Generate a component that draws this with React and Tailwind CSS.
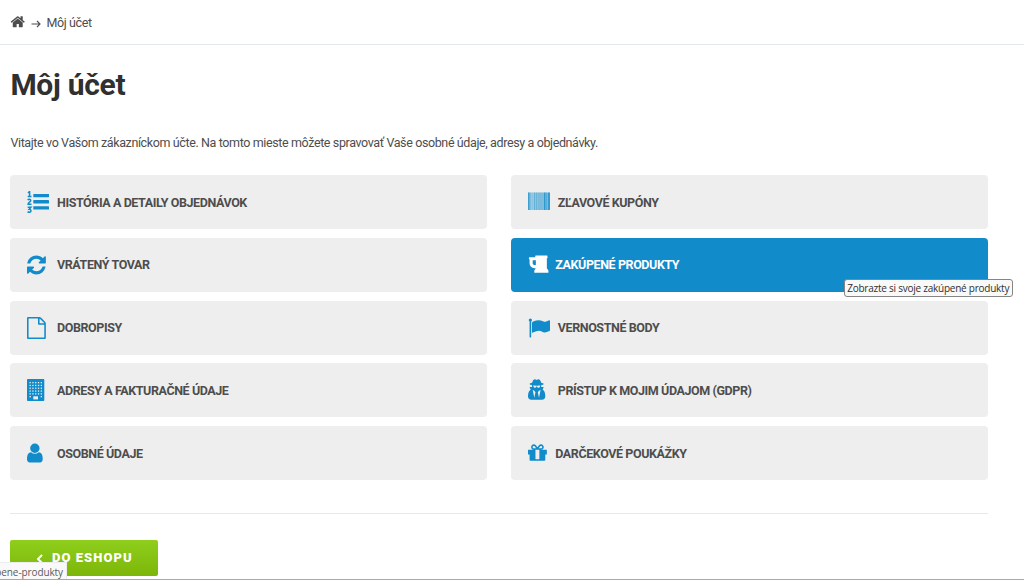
import React from "react";

const PATHS = {
  home: "M1472 992v480q0 26-19 45t-45 19h-384v-384h-256v384h-384q-26 0-45-19t-19-45v-480q0-1 .5-3t.5-3l575-474 575 474q1 2 1 6zm223-69l-62 74q-8 9-21 11h-3q-13 0-21-7l-692-577-692 577q-12 8-24 7-13-2-21-11l-62-74q-8-10-7-23.5t11-21.5l719-599q32-26 76-26t76 26l244 204v-195q0-14 9-23t23-9h192q14 0 23 9t9 23v408l219 182q10 8 11 21.5t-7 23.5z",
  refresh: "M1639 1056q0 5-1 7-64 268-268 434.5t-478 166.5q-146 0-282.5-55t-243.5-157l-129 129q-19 19-45 19t-45-19-19-45v-448q0-26 19-45t45-19h448q26 0 45 19t19 45-19 45l-137 137q71 66 161 102t187 36q134 0 250-65t186-179q11-17 53-117 8-23 30-23h192q13 0 22.5 9.5t9.5 22.5zm25-800v448q0 26-19 45t-45 19h-448q-26 0-45-19t-19-45 19-45l138-138q-148-137-349-137-134 0-250 65t-186 179q-11 17-53 117-8 23-30 23h-199q-13 0-22.5-9.5t-9.5-22.5v-7q65-268 270-434.5t480-166.5q146 0 284 55.5t245 156.5l130-129q19-19 45-19t45 19 19 45z",
  file: "M1596 380q28 28 48 76t20 88v1152q0 40-28 68t-68 28h-1344q-40 0-68-28t-28-68v-1600q0-40 28-68t68-28h896q40 0 88 20t76 48zm-444-244v376h376q-10-29-22-41l-313-313q-12-12-41-22zm384 1528v-1024h-416q-40 0-68-28t-28-68v-416h-768v1536h1280z",
  user: "M1536 1399q0 109-62.5 187t-150.5 78h-854q-88 0-150.5-78t-62.5-187q0-85 8.5-160.5t31.5-152 58.5-131 94-89 134.5-34.5q131 128 313 128t313-128q76 0 134.5 34.5t94 89 58.5 131 31.5 152 8.5 160.5zm-256-887q0 159-112.5 271.5t-271.5 112.5-271.5-112.5-112.5-271.5 112.5-271.5 271.5-112.5 271.5 112.5 112.5 271.5z",
  beer: "M640 896v-384h-256v256q0 53 37.5 90.5t90.5 37.5h128zm1024 448v192h-1152v-192l128-192h-128q-159 0-271.5-112.5t-112.5-271.5v-320l-64-64 32-128h480l32-128h960l32 192-64 32v800z",
  flag: "M320 256q0 72-64 110v1266q0 13-9.5 22.5t-22.5 9.5h-64q-13 0-22.5-9.5t-9.5-22.5v-1266q-64-38-64-110 0-53 37.5-90.5t90.5-37.5 90.5 37.5 37.5 90.5zm1472 64v763q0 25-12.5 38.5t-39.5 27.5q-215 116-369 116-61 0-123.5-22t-108.5-48-115.5-48-142.5-22q-192 0-464 146-17 9-33 9-26 0-45-19t-19-45v-742q0-32 31-55 21-14 79-43 236-120 421-120 107 0 200 29t219 88q38 19 88 19 54 0 117.5-21t110-47 88-47 54.5-21q26 0 45 19t19 45z",
  secret: "M704 1536l96-448-96-128-128-64zm384 0l128-640-128 64-96 128zm104-993q-2-4-4-6-10-8-96-8-70 0-167 19-7 2-21 2t-21-2q-97-19-167-19-86 0-96 8-2 2-4 6 2 18 4 27 2 3 7.5 6.5t7.5 10.5q2 4 7.5 20.5t7 20.5 7.5 17 8.5 17 9 14 12 13.5 14 9.5 17.5 8 20.5 4 24.5 2q36 0 59-12.5t32.5-30 14.5-34.5 11.5-29.5 17.5-12.5h12q11 0 17.5 12.5t11.5 29.5 14.5 34.5 32.5 30 59 12.5q13 0 24.5-2t20.5-4 17.5-8 14-9.5 12-13.5 9-14 8.5-17 7.5-17 7-20.5 7.5-20.5q2-7 7.5-10.5t7.5-6.5q2-9 4-27zm408 879q0 121-73 190t-194 69h-874q-121 0-194-69t-73-190q0-61 4.5-118t19-125.5 37.5-123.5 63.5-103.5 93.5-74.5l-90-220h214q-22-64-22-128 0-12 2-32-194-40-194-96 0-57 210-99 17-62 51.5-134t70.5-114q32-37 76-37 30 0 84 31t84 31 84-31 84-31q44 0 76 37 36 42 70.5 114t51.5 134q210 42 210 99 0 56-194 96 7 81-20 160h214l-82 225q63 33 107.5 96.5t65.5 143.5 29 151.5 8 148.5z",
  gift: "M1056 1356v-716h-320v716q0 25 18 38.5t46 13.5h192q28 0 46-13.5t18-38.5zm-456-844h195l-126-161q-26-31-69-31-40 0-68 28t-28 68 28 68 68 28zm688-96q0-40-28-68t-68-28q-43 0-69 31l-125 161h194q40 0 68-28t28-68zm376 256v320q0 14-9 23t-23 9h-96v416q0 40-28 68t-68 28h-1088q-40 0-68-28t-28-68v-416h-96q-14 0-23-9t-9-23v-320q0-14 9-23t23-9h440q-93 0-158.5-65.5t-65.5-158.5 65.5-158.5 158.5-65.5q107 0 168 77l128 165 128-165q61-77 168-77 93 0 158.5 65.5t65.5 158.5-65.5 158.5-158.5 65.5h440q14 0 23 9t9 23z",
};

// Glyphs share a 1792-unit em; x is the glyph's left side bearing.
function Glyph({ name, x = 0, className = "size-[22px]" }) {
  return (
    <svg viewBox={`${x} 0 1792 1792`} fill="currentColor" aria-hidden="true" className={`shrink-0 ${className}`}>
      <path d={PATHS[name]} />
    </svg>
  );
}

function NumberedList() {
  return (
    <svg viewBox="0 0 22 22" aria-hidden="true" className="size-[22px] shrink-0">
      <g fill="currentColor">
        <rect x="6.3" y="2.9" width="15.7" height="3.3" rx="0.4" />
        <rect x="6.3" y="9.1" width="15.7" height="3.3" rx="0.4" />
        <rect x="6.3" y="15.3" width="15.7" height="3.3" rx="0.4" />
      </g>
      <g fill="none" stroke="currentColor" strokeWidth="1.5">
        <path d="M0.9 1.8L2.6 0.6V5.4M0.7 5.4H4.5" />
        <path d="M0.7 9.2C1.6 7.7 3.9 8 3.7 9.6C3.6 10.8 1.3 11.3 1.1 13.2H4.5" />
        <path d="M0.7 16.3H3.9L2.2 18.3C4.7 18.2 4.4 21.3 2.3 21.3C1.6 21.3 1 21 0.6 20.6" />
      </g>
    </svg>
  );
}

const WINDOWS = [0, 1, 2, 3, 4, 5].flatMap((row) =>
  [0, 1, 2, 3, 4]
    .filter((col) => row < 5 || col === 0 || col === 4)
    .map((col) => [2.5 + col * 2.8, 3 + row * 2.8])
);

function Building() {
  return (
    <svg viewBox="0 0 22 22" aria-hidden="true" className="size-[22px] shrink-0">
      <rect width="17.3" height="22" rx="0.7" fill="currentColor" />
      {WINDOWS.map(([x, y]) => (
        <rect key={`${x}-${y}`} x={x} y={y} width="1.3" height="1.3" fill="#eeeeee" />
      ))}
      <rect x="6.3" y="17.3" width="4.7" height="3.1" fill="#eeeeee" />
    </svg>
  );
}

const BARS = [
  [0, 1.6, 0.7], [2.2, 0.5, 0.5], [3.5, 1.5, 0.15], [5.9, 1, 0.5], [7.7, 1.2, 0.45],
  [9.4, 1.6, 0.3], [11.5, 1, 0.55], [13.1, 1.8, 0.3], [15.7, 1.9, 0.8], [18, 1, 0.5], [19.6, 2.4, 0.75],
];

function Barcode() {
  return (
    <svg viewBox="0 0 22 22" fill="currentColor" aria-hidden="true" className="size-[22px] shrink-0">
      <rect y="1.5" width="22" height="17.5" opacity="0.32" />
      {BARS.map(([x, w, o]) => (
        <rect key={x} x={x} y="1.5" width={w} height="17.5" opacity={o} />
      ))}
    </svg>
  );
}

const LEFT = [
  { label: "História a detaily objednávok", icon: <NumberedList /> },
  { label: "Vrátený tovar", icon: <Glyph name="refresh" x={128} /> },
  { label: "Dobropisy", icon: <Glyph name="file" x={128} /> },
  { label: "Adresy a fakturačné údaje", icon: <Building /> },
  { label: "Osobné údaje", icon: <Glyph name="user" x={256} /> },
];

const RIGHT = [
  { label: "Zľavové kupóny", icon: <Barcode /> },
  { label: "Zakúpené produkty", icon: <Glyph name="beer" />, active: true, tight: true, tip: "Zobrazte si svoje zakúpené produkty" },
  { label: "Vernostné body", icon: <Glyph name="flag" /> },
  { label: "Prístup k mojim údajom (GDPR)", icon: <Glyph name="secret" x={192} /> },
  { label: "Darčekové poukážky", icon: <Glyph name="gift" x={128} />, tight: true },
];

function Tile({ label, icon, active, tight, tip }) {
  return (
    <li className="relative">
      <a
        className={`flex h-[54px] items-center rounded-[4px] pl-[16.6px] text-[12.5px] font-bold tracking-[-0.41px] uppercase ${tight ? "gap-[5.5px]" : "gap-2"} ${
          active ? "bg-[#118bca] text-white" : "bg-[#eeeeee] text-[#4d4d4d]"
        }`}
      >
        <span className={`flex ${active ? "text-white" : "text-[#118bca]"}`}>{icon}</span>
        <span className="pt-[2px] whitespace-nowrap">{label}</span>
      </a>
      {tip && (
        <span className="absolute top-[41px] left-[332.5px] z-10 flex h-[18px] w-[169px] items-center justify-center rounded-[3px] border border-[#858585] bg-[#f9f9f9] pt-px font-['Open_Sans',sans-serif] text-[10px] tracking-[-0.24px] whitespace-nowrap text-[#303030]">
          {tip}
        </span>
      )}
    </li>
  );
}

function Column({ items }) {
  return (
    <ul className="flex flex-col gap-[8.8px]">
      {items.map((item) => (
        <Tile key={item.label} {...item} />
      ))}
    </ul>
  );
}

export default function App() {
  return (
    <div className="relative flex h-[580px] w-[1024px] flex-col overflow-hidden border-b border-[#a9a9a9] bg-white font-[Roboto,sans-serif] text-[12.5px] tracking-[-0.38px] text-[#4d4d4d]">
      <nav className="flex h-[45px] shrink-0 items-center border-b border-[#e4e8ec] pl-[10.4px]">
        <Glyph name="home" className="-mt-px size-[15.5px]" />
        <svg viewBox="0 0 10 8" fill="none" stroke="currentColor" strokeWidth="1.1" aria-hidden="true" className="mt-[3px] ml-[5px] h-[8px] w-[10px]">
          <path d="M0.5 4H9M6 1L9 4L6 7" />
        </svg>
        <span className="ml-[5.5px] pt-[2px]">Môj účet</span>
      </nav>
      <main className="flex w-[987.5px] flex-col items-stretch pl-[10.4px]">
        <h1 className="mt-[22px] text-[30px] leading-[36px] font-bold tracking-[-0.3px] text-[#303030]">Môj účet</h1>
        <p className="mt-[31px] leading-[18px]">
          Vitajte vo Vašom zákazníckom účte. Na tomto mieste môžete spravovať Vaše osobné údaje, adresy a objednávky.
        </p>
        <div className="mt-[23px] grid grid-cols-2 gap-x-[24.5px]">
          <Column items={LEFT} />
          <Column items={RIGHT} />
        </div>
        <div className="mt-[33.3px] border-t border-[#e8e8e8]" />
        <a className="mt-[25.4px] flex h-[36.5px] w-[147.5px] items-center rounded-[2px] bg-linear-to-b from-[#8fce1b] to-[#7db608] pl-[25.6px] text-[13px] font-black tracking-[1.05px] text-white">
          <svg viewBox="0 0 8 10" fill="none" stroke="currentColor" strokeWidth="2" aria-hidden="true" className="mt-px h-[10px] w-[8px]">
            <path d="M6 1L2 5L6 9" />
          </svg>
          <span className="ml-[8px]">DO ESHOPU</span>
        </a>
      </main>
      <div className="absolute bottom-0 left-0 flex h-[17px] w-[67px] items-center justify-end border-t border-r border-[#ededed] bg-[#f9f9f9] pt-[2px] pr-[3px] font-['Open_Sans',sans-serif] text-[10px] tracking-[-0.1px] whitespace-nowrap text-[#5c5c5c]">
        pene-produkty
      </div>
    </div>
  );
}
